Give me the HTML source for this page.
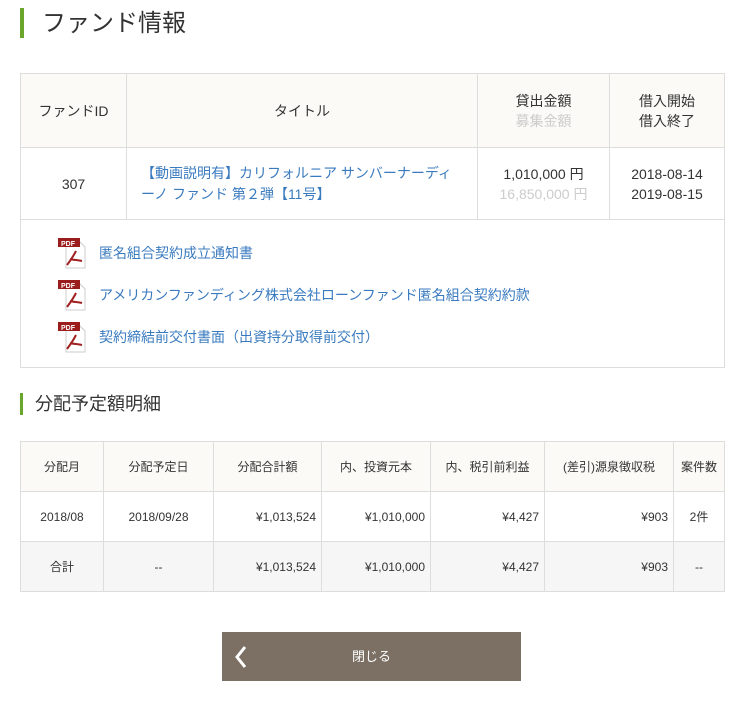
<!DOCTYPE html>
<html><head><meta charset="utf-8"><style>
body{margin:0;width:747px;height:703px;background:#fff;font-family:"Liberation Sans","Noto Sans CJK JP",sans-serif;color:#333;position:relative;overflow:hidden}
.abs{position:absolute}
h1{position:absolute;left:20px;top:8px;margin:0;height:30px;border-left:4px solid #6aa52c;padding-left:18px;font-size:24px;font-weight:normal;line-height:32px;color:#333}
h2{position:absolute;left:20px;top:393px;margin:0;height:22px;border-left:3px solid #6aa52c;padding-left:12px;font-size:18px;font-weight:normal;line-height:22px;color:#333}
table{position:absolute;border-collapse:collapse;font-size:14px;table-layout:fixed}
td{border:1px solid #ddd;text-align:center;padding:0 8px}
.hd td{background:#fbfaf6}
a{color:#3a7bbf;text-decoration:none}
.gray{color:#ccc}
.links{position:absolute;left:20px;top:219px;width:703px;height:148px;border:1px solid #ddd;border-top:none}
.lk{position:absolute;left:36px;font-size:14px;color:#3a7bbf}
.lk span{position:absolute;left:42px;top:6px;white-space:nowrap}
.t2 td{font-size:12px;white-space:nowrap}
.btn{position:absolute;left:222px;top:632px;width:299px;height:49px;background:#7c7064;color:#fff;font-size:13px;text-align:center;line-height:49px}
</style></head><body>
<h1>ファンド情報</h1>
<table style="left:20px;top:73px;width:704px">
<colgroup><col style="width:106px"><col style="width:351px"><col style="width:132px"><col style="width:115px"></colgroup>
<tr class="hd" style="height:74px"><td>ファンドID</td><td>タイトル</td><td style="line-height:20px">貸出金額<br><span class="gray">募集金額</span></td><td style="line-height:20px">借入開始<br>借入終了</td></tr>
<tr style="height:72px"><td>307</td><td style="text-align:left;padding-left:14px;padding-right:18px;line-height:21px"><a>【動画説明有】カリフォルニア サンバーナーディーノ ファンド 第２弾【11号】</a></td><td style="line-height:20px">1,010,000 円<br><span class="gray">16,850,000 円</span></td><td style="line-height:20px">2018-08-14<br>2019-08-15</td></tr>
</table>
<div class="links">
<div class="lk" style="top:18px"><svg width="34" height="32"><path d="M9 4h13l6 6v21H9z" fill="#fff" stroke="#ccc"/><rect x="1" y="1" width="22" height="9" fill="#9b1c1c"/><text x="4" y="9" font-size="7" fill="#fff" font-weight="bold" font-family="Liberation Sans">PDF</text><path d="M19 14c-3 6-6 10-9 14M13 22c3 1 8 1 12 2" stroke="#a12020" stroke-width="2" fill="none"/></svg><span>匿名組合契約成立通知書</span></div>
<div class="lk" style="top:60px"><svg width="34" height="32"><path d="M9 4h13l6 6v21H9z" fill="#fff" stroke="#ccc"/><rect x="1" y="1" width="22" height="9" fill="#9b1c1c"/><text x="4" y="9" font-size="7" fill="#fff" font-weight="bold" font-family="Liberation Sans">PDF</text><path d="M19 14c-3 6-6 10-9 14M13 22c3 1 8 1 12 2" stroke="#a12020" stroke-width="2" fill="none"/></svg><span>アメリカンファンディング株式会社ローンファンド匿名組合契約約款</span></div>
<div class="lk" style="top:102px"><svg width="34" height="32"><path d="M9 4h13l6 6v21H9z" fill="#fff" stroke="#ccc"/><rect x="1" y="1" width="22" height="9" fill="#9b1c1c"/><text x="4" y="9" font-size="7" fill="#fff" font-weight="bold" font-family="Liberation Sans">PDF</text><path d="M19 14c-3 6-6 10-9 14M13 22c3 1 8 1 12 2" stroke="#a12020" stroke-width="2" fill="none"/></svg><span>契約締結前交付書面（出資持分取得前交付）</span></div>
</div>
<h2>分配予定額明細</h2>
<table class="t2" style="left:20px;top:441px;width:704px">
<colgroup><col style="width:83px"><col style="width:110px"><col style="width:108px"><col style="width:109px"><col style="width:114px"><col style="width:129px"><col style="width:51px"></colgroup>
<tr class="hd" style="height:50px"><td>分配月</td><td>分配予定日</td><td>分配合計額</td><td>内、投資元本</td><td>内、税引前利益</td><td>(差引)源泉徴収税</td><td style="padding:0">案件数</td></tr>
<tr style="height:50px"><td>2018/08</td><td>2018/09/28</td><td style="text-align:right;padding-right:5px">¥1,013,524</td><td style="text-align:right;padding-right:5px">¥1,010,000</td><td style="text-align:right;padding-right:5px">¥4,427</td><td style="text-align:right;padding-right:5px">¥903</td><td style="padding:0">2件</td></tr>
<tr style="height:50px;background:#f6f6f6"><td>合計</td><td>--</td><td style="text-align:right;padding-right:5px">¥1,013,524</td><td style="text-align:right;padding-right:5px">¥1,010,000</td><td style="text-align:right;padding-right:5px">¥4,427</td><td style="text-align:right;padding-right:5px">¥903</td><td style="padding:0">--</td></tr>
</table>
<div class="btn"><svg class="abs" style="left:12px;top:13px" width="14" height="24"><path d="M11 2L3 12l8 10" stroke="#fff" stroke-width="3" fill="none"/></svg>閉じる</div>
</body></html>
